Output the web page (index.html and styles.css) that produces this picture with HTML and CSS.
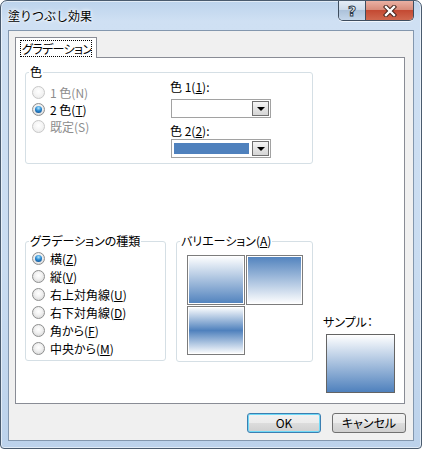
FILE: index.html
```html
<!DOCTYPE html>
<html lang="ja">
<head>
<meta charset="utf-8">
<title>塗りつぶし効果</title>
<link rel="stylesheet" href="styles.css">
</head>
<body>
<div class="window">
  <div class="titlebar">
    <span class="title">塗りつぶし効果</span>
    <div class="caps">
      <div class="cap help"><span class="q">?</span></div>
      <div class="cap close">
        <svg width="14" height="12" viewBox="0 0 14 12"><path d="M3 2 L11 10 M11 2 L3 10" stroke="#43221b" stroke-width="4.4" stroke-linecap="square"/><path d="M3 2 L11 10 M11 2 L3 10" stroke="#fff" stroke-width="2.4" stroke-linecap="square"/></svg>
      </div>
    </div>
  </div>
  <div class="client">
    <div class="tabstrip">
      <div class="tab"><span class="focus">グラデーション</span></div>
    </div>
    <div class="panel">
      <fieldset class="group g-color">
        <legend>色</legend>
        <div class="color-body">
          <div class="radios r17">
            <div class="radio disabled"><span class="rb"></span><span>1 色(N)</span></div>
            <div class="radio"><span class="rb on"></span><span>2 色(<u>T</u>)</span></div>
            <div class="radio disabled"><span class="rb"></span><span>既定(S)</span></div>
          </div>
          <div class="pickers">
            <div class="lbl">色 1(<u>1</u>):</div>
            <div class="combo"><div class="field"></div><div class="ddbtn"><span class="tri"></span></div></div>
            <div class="lbl lbl2">色 2(<u>2</u>):</div>
            <div class="combo c2"><div class="field"><div class="fill"></div></div><div class="ddbtn"><span class="tri"></span></div></div>
          </div>
        </div>
      </fieldset>
      <div class="row2">
        <fieldset class="group g-type">
          <legend>グラデーションの種類</legend>
          <div class="radios r18">
            <div class="radio"><span class="rb on"></span><span>横(<u>Z</u>)</span></div>
            <div class="radio"><span class="rb"></span><span>縦(<u>V</u>)</span></div>
            <div class="radio"><span class="rb"></span><span>右上対角線(<u>U</u>)</span></div>
            <div class="radio"><span class="rb"></span><span>右下対角線(<u>D</u>)</span></div>
            <div class="radio"><span class="rb"></span><span>角から(<u>F</u>)</span></div>
            <div class="radio"><span class="rb"></span><span>中央から(<u>M</u>)</span></div>
          </div>
        </fieldset>
        <fieldset class="group g-var">
          <legend>バリエーション(<u>A</u>)</legend>
          <div class="tiles">
            <div class="tile t1"></div>
            <div class="tile t2"></div>
            <div class="tile t3"></div>
          </div>
        </fieldset>
        <div class="sample">
          <div class="lbl">サンプル：</div>
          <div class="sample-box"></div>
        </div>
      </div>
    </div>
    <div class="buttons">
      <button class="btn default">OK</button>
      <button class="btn">キャンセル</button>
    </div>
  </div>
</div>
</body>
</html>
```
FILE: styles.css
```css
* { box-sizing: border-box; }
html, body { margin: 0; padding: 0; }
body {
  width: 422px;
  height: 449px;
  overflow: hidden;
  background: #fff;
  font-family: "Noto Sans CJK JP", "Noto Sans CJK SC", sans-serif;
  font-size: 12px;
  color: #000;
}
.window {
  width: 422px;
  height: 449px;
  border: 1px solid #4a5b6e;
  border-radius: 7px 7px 4px 4px;
  padding: 0 7px 7px;
  display: flex;
  flex-direction: column;
  background: linear-gradient(180deg, #bcd3ec 0, #cfe0f3 20px, #c9dcf1 60%, #bcd2eb 100%);
  box-shadow: inset 0 0 0 1px rgba(255,255,255,0.55);
}
.titlebar {
  height: 29px;
  display: flex;
  align-items: flex-start;
  flex: none;
}
.title {
  padding-top: 6px;
  line-height: 17px;
  font-size: 12px;
  text-shadow: 0 0 5px #fff, 0 0 3px #fff;
}
.caps {
  margin-left: auto;
  display: flex;
  height: 20px;
  border: 1px solid #3e4d5e;
  border-top: 0;
  border-radius: 0 0 5px 5px;
  overflow: hidden;
  box-shadow: 0 1px 0 rgba(255,255,255,0.7);
}
.cap {
  height: 100%;
  display: flex;
  align-items: center;
  justify-content: center;
}
.help {
  width: 27px;
  border-right: 1px solid #3e4d5e;
  background: linear-gradient(180deg, #e4ecf6 0, #cddbeb 45%, #adc2da 50%, #c4d6ea 100%);
}
.q {
  font-family: "DejaVu Sans", sans-serif;
  font-weight: bold;
  font-size: 14px;
  line-height: 14px;
  color: #fff;
  -webkit-text-stroke: 1px #2c3b4c;
}
.close {
  width: 47px;
  background: linear-gradient(180deg, #eab0a3 0, #d98d7c 45%, #c44a33 50%, #d0684f 100%);
}
.client {
  flex: 1;
  background: #f0f0f0;
  border: 1px solid #8397ae;
  padding: 6px 8px 0 6px;
  display: flex;
  flex-direction: column;
}
.tabstrip { display: flex; }
.tab {
  position: relative;
  z-index: 1;
  width: 82px;
  height: 21px;
  margin-bottom: -1px;
  border: 1px solid #898c95;
  border-bottom: 0;
  background: #fff;
  padding: 2px 0 0 4px;
}
.focus {
  display: block;
  width: 72px;
  height: 17px;
  border: 1px dotted #000;
  line-height: 15px;
  padding-left: 1px;
  font-feature-settings: "palt";
  letter-spacing: -0.6px;
  white-space: nowrap;
  overflow: hidden;
}
.panel {
  width: 390px;
  height: 347px;
  border: 1px solid #898c95;
  background: #fff;
  padding: 7px 0 0 9px;
  font-feature-settings: "palt";
}
.group {
  margin: 0;
  padding: 0;
  border: 1px solid #d5dfe5;
  border-radius: 3px;
  min-width: 0;
}
.group legend {
  padding: 0 1px;
  margin-left: 3px;
  line-height: 14px;
  white-space: nowrap;
}
.g-color { width: 288px; }
.color-body {
  display: flex;
  padding: 1px 0 5px 6px;
}
.radios {
  display: flex;
  flex-direction: column;
}
.color-body .radios { width: 138px; padding-top: 4px; }
.radio {
  display: flex;
  align-items: center;
  gap: 5px;
  white-space: nowrap;
}
.r17 .radio { height: 17px; }
.r18 .radio { height: 18px; }
.rb {
  width: 13px;
  height: 13px;
  flex: none;
  border-radius: 50%;
  border: 1px solid #8e8f8f;
  background: radial-gradient(circle at 50% 40%, #fff 0, #f2f2f2 40%, #cfcfcf 100%);
  display: flex;
  align-items: center;
  justify-content: center;
}
.rb.on::after {
  content: "";
  width: 7px;
  height: 7px;
  border-radius: 50%;
  background: radial-gradient(circle at 50% 30%, #b2e8ff 0, #2b8ad2 45%, #0c427f 100%);
}
.disabled { color: #8d8d8d; }
.disabled .rb {
  border-color: #c8c8c8;
  background: radial-gradient(circle at 50% 40%, #fff 0, #f4f4f4 50%, #e6e6e6 100%);
}
.lbl { line-height: 14px; white-space: nowrap; }
.lbl2 { margin-top: 6px; }
.pickers { display: flex; flex-direction: column; }
.combo {
  width: 100px;
  height: 19px;
  margin-top: 5px;
  margin-left: 1px;
  border: 1px solid #a2a2a2;
  background: #fff;
  padding: 1px;
  display: flex;
}
.c2 { margin-top: 1px; }
.field {
  flex: 1;
  padding: 2px 3px 2px 1px;
}
.fill { height: 11px; background: #4f81bd; }
.ddbtn {
  width: 17px;
  height: 15px;
  border: 1px solid #707070;
  background: linear-gradient(180deg, #f6f6f6 0, #e4e4e4 50%, #d6d6d6 100%);
  display: flex;
  align-items: center;
  justify-content: center;
}
.tri {
  width: 0;
  height: 0;
  border-left: 4px solid transparent;
  border-right: 4px solid transparent;
  border-top: 4px solid #000;
  margin-top: 1px;
}
.row2 {
  display: flex;
  align-items: flex-start;
  margin-top: 70px;
}
.g-type { width: 141px; }
.g-type .radios { padding: 1px 0 3px 6px; }
.g-var { width: 137px; margin-left: 10px; }
.tiles {
  display: grid;
  grid-template-columns: 58px 57px;
  grid-template-rows: 50px 49px;
  gap: 1px;
  padding: 7px 0 6px 10px;
}
.tile {
  border: 1px solid #7c7c7c;
  padding: 1px;
  background-clip: content-box;
  background-color: #fff;
}
.t1 { background-image: linear-gradient(180deg, #fff 0, #4f81bd 100%); }
.t2 { background-image: linear-gradient(180deg, #4f81bd 0, #fff 100%); }
.t3 { background-image: linear-gradient(180deg, #fff 0, #4f81bd 50%, #fff 100%); }
.sample {
  margin-left: 10px;
  margin-top: 81px;
  display: flex;
  flex-direction: column;
}
.sample-box {
  width: 69px;
  height: 59px;
  margin-top: 5px;
  margin-left: 3px;
  border: 1px solid #646464;
  background: linear-gradient(180deg, #fff 0, #4f81bd 100%);
}
.buttons {
  display: flex;
  justify-content: flex-end;
  gap: 11px;
  margin-top: 9px;
  margin-right: -1px;
}
.btn {
  width: 74px;
  height: 20px;
  padding: 0;
  border: 1px solid #707070;
  border-radius: 3px;
  background: linear-gradient(180deg, #f2f2f2 0, #ebebeb 50%, #dddddd 50%, #cfcfcf 100%);
  font-family: "Noto Sans CJK JP", "Noto Sans CJK SC", sans-serif;
  font-size: 12px;
  line-height: 18px;
  color: #000;
  font-feature-settings: "palt";
}
.btn.default {
  border-color: #3c7fb1;
  box-shadow: inset 0 0 0 1px #6fd9f7;
}
```
